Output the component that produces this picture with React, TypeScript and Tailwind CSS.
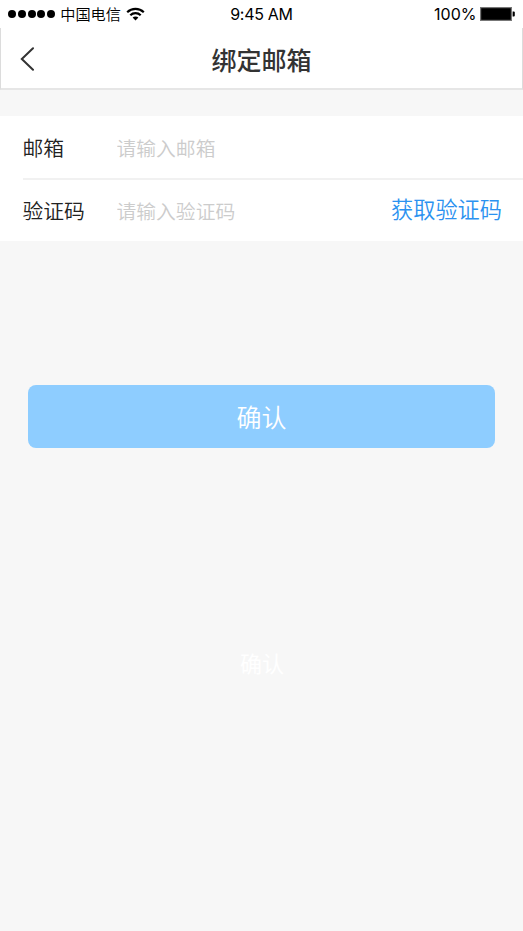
import React, { useState } from 'react';

function StatusBar() {
  return (
    <div className="grid h-7 grid-cols-[1fr_auto_1fr] items-center bg-white pl-2 pr-2 text-black">
      <div className="flex items-center">
        <div className="flex gap-[1.8px]">
          {[1, 2, 3, 4, 5].map((dot) => (
            <span key={dot} className="h-2 w-2 rounded-full bg-black" />
          ))}
        </div>
        <span className="ml-[5px] pt-0.5 text-[15.2px] font-[350] leading-6">中国电信</span>
        <svg className="ml-[5px]" width="19" height="14" viewBox="0 0 19 14" fill="none" stroke="#000" strokeWidth="2.2">
          <path d="M1.2 5.2C5.8 .8 13.2 .8 17.8 5.2" />
          <path d="M4.3 8.3C7.2 5.5 11.8 5.5 14.7 8.3" />
          <path d="M6.6 10.6C8.2 9.2 10.8 9.2 12.4 10.6L9.5 13.4Z" fill="#000" stroke="none" />
        </svg>
      </div>
      <span className="font-['Inter','Noto_Sans_CJK_SC',sans-serif] text-[16px] tracking-[-0.3px]">9:45 AM</span>
      <div className="flex items-center justify-end">
        <span className="font-['Inter','Noto_Sans_CJK_SC',sans-serif] text-[16px]">100%</span>
        <svg className="ml-[3.5px]" width="35" height="14" viewBox="0 0 35 14">
          <rect x=".6" y=".6" width="30.8" height="12.8" fill="#000" stroke="#777" strokeWidth="1.2" />
          <path d="M32.6 4.5h1.2q1 0 1 1v3q0 1-1 1h-1.2z" fill="#000" />
        </svg>
      </div>
    </div>
  );
}

function NavBar({ title }: { title: string }) {
  return (
    <header className="grid h-[62px] grid-cols-[1fr_auto_1fr] items-center border-x border-b-2 border-x-[#dcdcdc] border-b-[#e6e6e6] bg-white">
      <button aria-label="返回" className="ml-[19px] mt-0.5 w-4">
        <svg width="15" height="24" viewBox="0 0 15 24" fill="none" stroke="#333" strokeWidth="2" strokeLinecap="round">
          <path d="M13 1.2L1.8 12L13 22.8" />
        </svg>
      </button>
      <h1 className="pt-1.5 text-[25px] font-medium leading-none text-[#333]">{title}</h1>
    </header>
  );
}

interface FieldProps {
  label: string;
  placeholder: string;
  value: string;
  onChange: (value: string) => void;
  children?: React.ReactNode;
}

function Field({ label, placeholder, value, onChange, children }: FieldProps) {
  return (
    <div className="flex h-[61px] items-center pr-[21px]">
      <label className="w-[94px] shrink-0 pt-0.5 text-[20.8px] font-[350] text-[#222]">{label}</label>
      <input
        className="min-w-0 flex-1 pt-[5px] text-[19.8px] font-[350] text-[#333] outline-none placeholder:text-[#ccc] placeholder:opacity-100"
        placeholder={placeholder}
        value={value}
        onChange={(e) => onChange(e.target.value)}
      />
      {children}
    </div>
  );
}

export default function App() {
  const [email, setEmail] = useState('');
  const [code, setCode] = useState('');

  return (
    <div className="min-h-screen bg-[#f7f7f7] font-['Liberation_Sans','Noto_Sans_CJK_SC',sans-serif]">
      <StatusBar />
      <NavBar title="绑定邮箱" />

      <form className="mt-[26px] bg-white pl-[22.5px] pt-px">
        <Field label="邮箱" placeholder="请输入邮箱" value={email} onChange={setEmail} />
        <div className="h-0.5 bg-[#f1f1f1]" />
        <Field label="验证码" placeholder="请输入验证码" value={code} onChange={setCode}>
          <button type="button" className="shrink-0 pt-px text-[22.2px] font-[350] text-[#2b92f0]">
            获取验证码
          </button>
        </Field>
      </form>

      <div className="mt-36 px-7">
        <button className="h-[63px] w-full rounded-lg bg-[#8ecdff] pt-1 text-[25px] font-[350] text-white">
          确认
        </button>
      </div>
      <p className="mt-[200px] pl-px text-center text-[22px] leading-[33px] text-white">确认</p>
    </div>
  );
}
